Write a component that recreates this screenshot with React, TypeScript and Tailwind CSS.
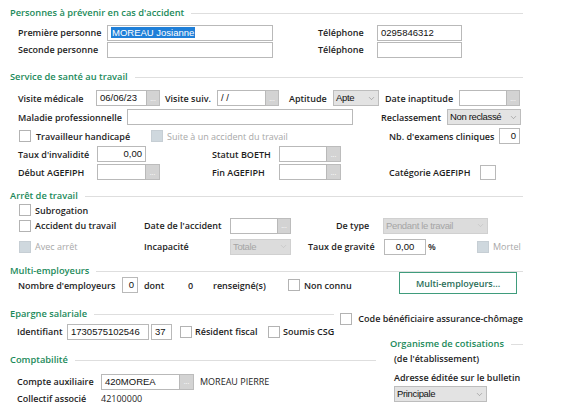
import { ChevronDown } from 'lucide-react'

const INPUT_FONT = "font-['Liberation_Sans',Arial,sans-serif]"

const Header = ({ title, lineW }: { title: string, lineW?: string }) => (
  <div className="flex items-center h-[14px]">
    <span className="text-[9.3px] font-semibold text-[#1b8a5a] leading-none whitespace-nowrap">{title}</span>
    <div className={"h-px bg-[#dedede] ml-[7px] " + (lineW ?? 'flex-1')} />
  </div>
)

const Label = ({ w, children, grey, className }: { w?: string, children: React.ReactNode, grey?: boolean, className?: string }) => (
  <span className={"shrink-0 whitespace-nowrap leading-none text-[9px] " + (grey ? 'text-[#a8a8a8] ' : 'text-[#1e1e1e] ') + (w ?? '') + ' ' + (className ?? '')}>
    {children}
  </span>
)

const Box = ({ w, children, align, className }: { w: string, children?: React.ReactNode, align?: string, className?: string }) => (
  <div className={"shrink-0 h-[16px] border border-[#b9b9b9] bg-white flex items-center px-[3px] text-[9.5px] font-normal text-[#111] leading-none " + INPUT_FONT + ' ' + w + ' ' + (align ?? 'justify-start') + ' ' + (className ?? '')}>
    {children}
  </div>
)

const Dots = ({ w }: { w?: string }) => (
  <div className={"shrink-0 h-[16px] bg-[#d3d3d3] border border-[#bcbcbc] border-l-0 flex items-center justify-center text-[7px] font-normal text-white leading-none " + (w ?? 'w-[13px]')}>
    ...
  </div>
)

const DateField = ({ w, bw, value }: { w: string, bw?: string, value?: string }) => (
  <div className="flex shrink-0">
    <Box w={w}>{value}</Box>
    <Dots w={bw} />
  </div>
)

const Select = ({ w, value, disabled }: { w: string, value: string, disabled?: boolean }) => (
  <div className={"shrink-0 h-[16px] border flex items-center pl-[2px] pr-[2px] text-[9.5px] font-normal leading-none tracking-[-0.35px] " + INPUT_FONT + ' ' + w + ' ' +
    (disabled ? 'bg-[#dcdcdc] border-[#d0d0d0] text-[#a5a5a5]' : 'bg-[#e3e3e3] border-[#bdbdbd] text-[#111]')}>
    <span className="whitespace-nowrap">{value}</span>
    <ChevronDown size={9} strokeWidth={1.3} className={"shrink-0 ml-auto " + (disabled ? 'text-[#b8b8b8]' : 'text-[#777]')} />
  </div>
)

const Check = ({ disabled, className }: { disabled?: boolean, className?: string }) => (
  <div className={"shrink-0 w-[12px] h-[12px] border " + (disabled ? 'bg-[#cfd8de] border-[#c6ced4] ' : 'bg-white border-[#b3b3b3] ') + (className ?? '')} />
)

const Row = ({ children, className }: { children: React.ReactNode, className?: string }) => (
  <div className={"flex items-center " + (className ?? 'h-[16px]')}>{children}</div>
)

const App = () => {
  return (
    <div className="w-[576px] h-[411px] bg-white overflow-hidden font-['Open_Sans',sans-serif] font-semibold">
      <div className="w-[513px] ml-[10px] flex flex-col">
        {/* Personnes à prévenir */}
        <div className="mt-[6px]"><Header title="Personnes à prévenir en cas d'accident" /></div>
        <Row className="h-[17px] mt-[4px]">
          <Label w="w-[89px] ml-[8px]">Première personne</Label>
          <Box w="w-[166px]">
            <span className="bg-[#1f7fd8] text-white px-[1px] py-[1px]">MOREAU Josianne</span>
          </Box>
          <Label w="w-[59px] ml-[45px]">Téléphone</Label>
          <Box w="w-[85px]">0295846312</Box>
        </Row>
        <Row className="h-[17px]">
          <Label w="w-[89px] ml-[8px]">Seconde personne</Label>
          <Box w="w-[166px]" />
          <Label w="w-[59px] ml-[45px]">Téléphone</Label>
          <Box w="w-[85px]" />
        </Row>

        {/* Service de santé */}
        <div className="mt-[12px]"><Header title="Service de santé au travail" /></div>
        <Row className="h-[16px] mt-[6px]">
          <Label w="w-[78px] ml-[8px]">Visite médicale</Label>
          <DateField w="w-[51px]" value="06/06/23" />
          <Label w="w-[52px] ml-[5px]">Visite suiv.</Label>
          <DateField w="w-[49px]" value="  /  /" />
          <Label w="w-[44px] ml-[10px]">Aptitude</Label>
          <Select w="w-[46px]" value="Apte" />
          <Label w="w-[74px] ml-[6px]">Date inaptitude</Label>
          <DateField w="w-[48px]" />
        </Row>
        <Row className="h-[16px] mt-[3px]">
          <Label w="w-[109px] ml-[8px]">Maladie professionnelle</Label>
          <Box w="w-[226px]" />
          <Label w="w-[66px] ml-[28px]">Reclassement</Label>
          <Select w="w-[74px]" value="Non reclassé" />
        </Row>
        <Row className="h-[16px] mt-[3px]">
          <Check className="ml-[9px]" />
          <Label w="w-[115px] ml-[5px]">Travailleur handicapé</Label>
          <Check disabled />
          <Label w="w-[222px] ml-[4px]" grey className="font-normal">Suite à un accident du travail</Label>
          <Label w="w-[110px]">Nb. d'examens cliniques</Label>
          <Box w="w-[21px]" align="justify-end">0</Box>
        </Row>
        <Row className="h-[16px] mt-[2px]">
          <Label w="w-[79px] ml-[8px]">Taux d'invalidité</Label>
          <Box w="w-[49px]" align="justify-end">0,00</Box>
          <Label w="w-[67px] ml-[66px]">Statut BOETH</Label>
          <DateField w="w-[48px]" bw="w-[14px]" />
        </Row>
        <Row className="h-[16px] mt-[2px]">
          <Label w="w-[79px] ml-[8px]">Début AGEFIPH</Label>
          <DateField w="w-[49px]" bw="w-[14px]" />
          <Label w="w-[67px] ml-[52px]">Fin AGEFIPH</Label>
          <DateField w="w-[48px]" bw="w-[14px]" />
          <Label w="w-[91px] ml-[48px]">Catégorie AGEFIPH</Label>
          <Box w="w-[16px]" className="!h-[15px]" />
        </Row>

        {/* Arrêt de travail */}
        <div className="mt-[9px]"><Header title="Arrêt de travail" /></div>
        <Row className="h-[14px]">
          <Check className="ml-[9px]" />
          <Label w="ml-[4px]">Subrogation</Label>
        </Row>
        <Row className="h-[17px]">
          <Check className="ml-[9px]" />
          <Label w="w-[109px] ml-[4px]">Accident du travail</Label>
          <Label w="w-[86px]">Date de l'accident</Label>
          <DateField w="w-[48px]" />
          <Label w="w-[47px] ml-[45px]">De type</Label>
          <Select w="w-[105px]" value="Pendant le travail" disabled />
        </Row>
        <Row className="h-[17px] mt-[4px]">
          <Check className="ml-[9px]" disabled />
          <Label w="w-[109px] ml-[4px]" grey className="font-normal">Avec arrêt</Label>
          <Label w="w-[86px]">Incapacité</Label>
          <Select w="w-[61px]" value="Totale" disabled />
          <Label w="w-[76px] ml-[17px]">Taux de gravité</Label>
          <Box w="w-[42px]" align="justify-center">0,00</Box>
          <Label w="w-[49px] ml-[2px]">%</Label>
          <Check disabled />
          <Label w="ml-[4px]" grey className="font-normal">Mortel</Label>
        </Row>

        {/* Multi-employeurs */}
        <div className="mt-[9px]"><Header title="Multi-employeurs" /></div>
        <Row className="h-[18px] -mt-[2px]">
          <Label w="w-[104px] ml-[8px]">Nombre d'employeurs</Label>
          <Box w="w-[16px]" align="justify-end">0</Box>
          <Label w="w-[44px] ml-[6px]">dont</Label>
          <Label w="w-[25px]">0</Label>
          <Label w="w-[75px]">renseigné(s)</Label>
          <Check />
          <Label w="w-[95px] ml-[4px]">Non connu</Label>
          <button className="shrink-0 self-start -mt-[4px] w-[118px] h-[22px] border border-[#3f9c7c] bg-white text-[9px] font-semibold text-[#2a6e58] leading-none">
            Multi-employeurs...
          </button>
        </Row>

        {/* Epargne salariale */}
        <div className="mt-[13px] flex items-center h-[14px]">
          <div className="w-[325px]"><Header title="Epargne salariale" /></div>
          <Check className="ml-[6px] mt-[9px]" />
          <Label w="ml-[6px] mt-[9px]">Code bénéficiaire assurance-chômage</Label>
        </div>

        <div className="flex">
          <div className="w-[366px] flex flex-col">
            <Row className="h-[17px] mt-[2px]">
              <Label w="w-[50px] ml-[7px]">Identifiant</Label>
              <Box w="w-[82px]">1730575102546</Box>
              <Box w="w-[21px]" className="ml-[2px]">37</Box>
              <Check className="ml-[8px]" />
              <Label w="w-[73px] ml-[3px]">Résident fiscal</Label>
              <Check />
              <Label w="ml-[3px]">Soumis CSG</Label>
            </Row>
            <div className="mt-[13px]"><Header title="Comptabilité" /></div>
            <Row className="h-[17px] mt-[6px]">
              <Label w="w-[84px] ml-[7px]">Compte auxiliaire</Label>
              <Box w="w-[79px]">420MOREA</Box>
              <Dots w="w-[14px]" />
              <Label w="ml-[6px]" className="font-normal text-[9.5px]">MOREAU PIERRE</Label>
            </Row>
            <Row className="h-[17px]">
              <Label w="w-[84px] ml-[7px]">Collectif associé</Label>
              <Label className="font-normal text-[9.5px]">42100000</Label>
            </Row>
          </div>
          <div className="w-[133px] ml-[14px] flex flex-col">
            <div className="mt-[16px]"><Header title="Organisme de cotisations" /></div>
            <Row className="h-[14px]">
              <Label w="ml-[4px]">(de l'établissement)</Label>
            </Row>
            <Row className="h-[14px] mt-[5px]">
              <Label w="ml-[4px]">Adresse éditée sur le bulletin</Label>
            </Row>
            <div className="mt-[2px] ml-[4px]">
              <Select w="w-[93px]" value="Principale" />
            </div>
          </div>
        </div>
      </div>
    </div>
  )
}

export default App
